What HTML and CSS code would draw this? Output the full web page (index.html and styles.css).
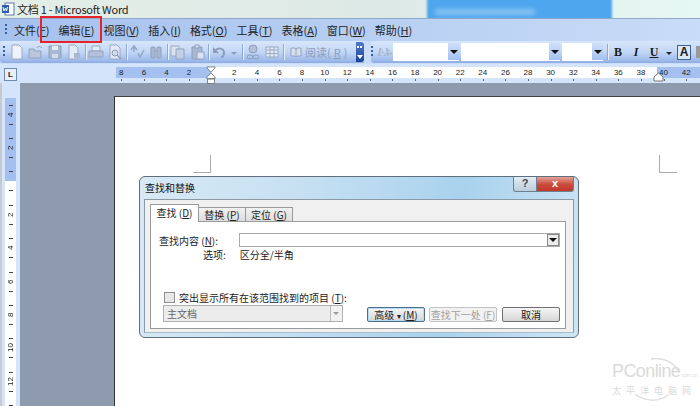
FILE: index.html
```html
<!DOCTYPE html>
<html lang="zh-CN">
<head>
    <meta charset="UTF-8">
    <title>文档 1 - Microsoft Word</title>
    <link rel="stylesheet" href="styles.css">
</head>
<body>
    <div class="app">
        <div class="titlebar">
            <svg class="app-icon" width="13" height="14" viewBox="0 0 13 14"><rect x="3" y="1" width="9" height="12" fill="#fff" stroke="#5c76a8"/><rect x="0" y="3" width="7" height="8" fill="#2f5cb0"/><path d="M1 5l1 4 1.500-3 1 3 1-4" fill="none" stroke="#fff"/></svg>
            <span class="title-text">文档 1 - Microsoft Word</span>
            <span class="glass"><i></i></span>
        </div>

        <div class="menubar">
            <span class="grip"></span>
            <span class="menu-item">文件(<u>F</u>)</span>
            <span class="menu-item">编辑(<u>E</u>)</span>
            <span class="menu-item">视图(<u>V</u>)</span>
            <span class="menu-item">插入(<u>I</u>)</span>
            <span class="menu-item">格式(<u>O</u>)</span>
            <span class="menu-item">工具(<u>T</u>)</span>
            <span class="menu-item">表格(<u>A</u>)</span>
            <span class="menu-item">窗口(<u>W</u>)</span>
            <span class="menu-item">帮助(<u>H</u>)</span>
        </div>

        <div class="toolbars">
            <div class="toolbar toolbar-std">
                <span class="grip"></span>
                <svg class="tool" viewBox="0 0 16 16"><path d="M3 1h7l3 3v11H3z" fill="#eef3fb" stroke="#9aa9c4"/></svg>
                <svg class="tool" viewBox="0 0 16 16"><path d="M1 5h5l1 2h6v7H1z" fill="#b9c6dc" stroke="#93a3bf"/><path d="M9 4c1-2 3-2 5 0" fill="none" stroke="#93a3bf"/></svg>
                <svg class="tool" viewBox="0 0 16 16"><path d="M2 2h12v12H2z" fill="#a9b8d2" stroke="#8d9db9"/><path d="M5 2h6v4H5z" fill="#e6ecf6"/><path d="M5 10h6v4H5z" fill="#d3dcec"/></svg>
                <svg class="tool" viewBox="0 0 16 16"><path d="M3 1h6l3 3v11H3z" fill="#e4eaf5" stroke="#9aa9c4"/><path d="M8 9h6v5H8z" fill="#a9b8d2"/></svg>
                <span class="tool-sep"></span>
                <svg class="tool" viewBox="0 0 16 16"><path d="M4 2h8v5H4z" fill="#e4eaf5" stroke="#9aa9c4"/><path d="M1 7h14v6H1z" fill="#b3c0d8" stroke="#93a3bf"/></svg>
                <svg class="tool" viewBox="0 0 16 16"><path d="M3 1h7l3 3v11H3z" fill="#e4eaf5" stroke="#9aa9c4"/><circle cx="8" cy="9" r="3" fill="#cfd9ea" stroke="#8d9db9"/><path d="M10 11l4 4" stroke="#8d9db9" stroke-width="1.500"/></svg>
                <span class="tool-sep"></span>
                <svg class="tool" viewBox="0 0 16 16"><path d="M2 6l3-4 3 4M5 2v6M9 9l2 4 4-7" fill="none" stroke="#93a3bf" stroke-width="1.400"/></svg>
                <svg class="tool" viewBox="0 0 16 16"><rect x="3" y="3" width="4" height="11" rx="1" fill="#a9b8d2" stroke="#8d9db9"/><rect x="9" y="3" width="4" height="11" rx="1" fill="#a9b8d2" stroke="#8d9db9"/><path d="M7 7h2" stroke="#8d9db9"/></svg>
                <span class="tool-sep"></span>
                <svg class="tool" viewBox="0 0 16 16"><path d="M1 2h8v10H1z" fill="#dbe3f1" stroke="#9aa9c4"/><path d="M6 5h8v10H6z" fill="#c3cfe3" stroke="#93a3bf"/></svg>
                <svg class="tool" viewBox="0 0 16 16"><path d="M3 3h10v12H3z" fill="#a9b8d2" stroke="#8d9db9"/><path d="M6 1h4v3H6z" fill="#dbe3f1" stroke="#8d9db9"/><path d="M8 8h7v7H8z" fill="#dbe3f1" stroke="#93a3bf"/></svg>
                <span class="tool-sep"></span>
                <svg class="tool" viewBox="0 0 16 16"><path d="M4 7c3-4 9-3 9 2 0 2-1 4-3 4" fill="none" stroke="#8d9db9" stroke-width="2"/><path d="M2 3v6h6z" fill="#8d9db9"/></svg>
                <span class="tool-arrow"></span>
                <span class="tool-sep"></span>
                <svg class="tool" viewBox="0 0 16 16"><circle cx="8" cy="5" r="4" fill="#b3c0d8" stroke="#8d9db9"/><ellipse cx="5" cy="13" rx="3" ry="2" fill="none" stroke="#8d9db9"/><ellipse cx="11" cy="13" rx="3" ry="2" fill="none" stroke="#8d9db9"/></svg>
                <svg class="tool" viewBox="0 0 16 16"><path d="M2 3h12v10H2zM2 6h12M2 9.500h12M6 3v10M10 3v10" fill="#e4eaf5" stroke="#9aa9c4"/></svg>
                <span class="tool-sep"></span>
                <span class="read-btn">
                    <svg width="12" height="12" viewBox="0 0 12 12"><path d="M1 2h4l1 1 1-1h4v8H7l-1 1-1-1H1zM6 3v8" fill="#d6dfee" stroke="#93a3bf"/></svg>
                    阅读(<u>R</u>)
                </span>
                <span class="chevron"><i></i><b></b></span>
            </div>
            <div class="toolbar toolbar-fmt">
                <span class="grip"></span>
                <span class="style-icon">4A</span>
                <span class="combo combo-style"><i></i></span>
                <span class="combo combo-font"><i></i></span>
                <span class="combo combo-size"><i></i></span>
                <span class="tool-sep"></span>
                <span class="fmt-btn fmt-b">B</span>
                <span class="fmt-btn fmt-i">I</span>
                <span class="fmt-btn fmt-u">U</span>
                <span class="tool-arrow tool-arrow-dark"></span>
                <span class="fmt-btn fmt-a">A</span>
                <span class="fmt-more"></span>
            </div>
        </div>

        <div class="ruler-row">
            <span class="tab-stop">L</span>
            <div class="h-ruler">
                <span class="h-cell">8</span>
                <span class="h-cell">6</span>
                <span class="h-cell">4</span>
                <span class="h-cell">2</span>
                <span class="h-cell h-zero"></span>
                <span class="h-cell">2</span>
                <span class="h-cell">4</span>
                <span class="h-cell">6</span>
                <span class="h-cell">8</span>
                <span class="h-cell">10</span>
                <span class="h-cell">12</span>
                <span class="h-cell">14</span>
                <span class="h-cell">16</span>
                <span class="h-cell">18</span>
                <span class="h-cell">20</span>
                <span class="h-cell">22</span>
                <span class="h-cell">24</span>
                <span class="h-cell">26</span>
                <span class="h-cell">28</span>
                <span class="h-cell">30</span>
                <span class="h-cell">32</span>
                <span class="h-cell">34</span>
                <span class="h-cell">36</span>
                <span class="h-cell">38</span>
                <span class="h-cell">40</span>
                <span class="h-cell">42</span>
            </div>
            <svg class="indent indent-left" width="10" height="18" viewBox="0 0 11 20"><path d="M1 1h9v1L5.500 7 1 2zM5.500 8L10 12v2H1v-2z" fill="#fff" stroke="#777"/><rect x="1.500" y="14.500" width="8" height="5" fill="#fff" stroke="#777"/></svg>
            <svg class="indent indent-right" width="11" height="10" viewBox="0 0 11 10"><path d="M5.500 1L10 5v4H1V5z" fill="#fff" stroke="#777"/></svg>
        </div>

        <div class="workspace">
            <div class="v-ruler-col">
                <div class="v-ruler">
                    <span class="v-cell v-blue"><i></i><em>4</em><i></i></span>
                    <span class="v-cell v-blue"><i></i><em>2</em><i></i></span>
                    <span class="v-cell v-zero"><i></i><em></em><i></i></span>
                    <span class="v-cell"><i></i><em>2</em><i></i></span>
                    <span class="v-cell"><i></i><em>4</em><i></i></span>
                    <span class="v-cell"><i></i><em>6</em><i></i></span>
                    <span class="v-cell"><i></i><em>8</em><i></i></span>
                    <span class="v-cell"><i></i><em>10</em><i></i></span>
                    <span class="v-cell"><i></i><em>12</em><i></i></span>
                    <span class="v-cell"><i></i><em></em><i></i></span>
                </div>
            </div>
            <div class="desk">
                <div class="page">
                    <span class="crop crop-left"></span>
                    <span class="crop crop-right"></span>
                    <div class="watermark">
                        <svg class="wm-arc" width="60" height="44" viewBox="0 0 60 44"><path d="M24 1c12-2 24 3 28 14M8 36c10 8 24 8 33 1" fill="none" stroke="#dedede" stroke-width="1.500"/></svg>
                        <span class="wm-logo">PConline<small>.com.cn</small></span>
                        <span class="wm-cn">太平洋电脑网</span>
                    </div>
                </div>
            </div>
        </div>

        <span class="highlight"></span>

        <div class="dialog">
            <div class="dialog-head">
                <span class="dialog-title">查找和替换</span>
                <span class="caption-btn caption-help">?</span>
                <span class="caption-btn caption-close">x</span>
            </div>
            <div class="dialog-body">
                <div class="tabs">
                    <span class="tab tab-active">查找 (<u>D</u>)</span>
                    <span class="tab">替换 (<u>P</u>)</span>
                    <span class="tab">定位 (<u>G</u>)</span>
                </div>
                <div class="tab-panel">
                    <div class="find-row">
                        <label class="find-label">查找内容 (<u>N</u>):</label>
                        <span class="find-input"><i></i></span>
                    </div>
                    <div class="option-row">
                        <span class="option-label">选项:</span>
                        <span>区分全/半角</span>
                    </div>
                    <div class="check-row">
                        <span class="checkbox"></span>
                        <span>突出显示所有在该范围找到的项目 (<u>T</u>):</span>
                    </div>
                    <div class="action-row">
                        <span class="scope-select">主文档<i></i></span>
                        <span class="btn btn-default">高级 <small>▾</small> (<u>M</u>)</span>
                        <span class="btn btn-disabled">查找下一处 (<u>F</u>)</span>
                        <span class="btn btn-cancel">取消</span>
                    </div>
                </div>
            </div>
        </div>
    </div>
</body>
</html>
```

FILE: styles.css
```css
html, body {
    margin: 0;
    padding: 0;
}
body {
    width: 700px;
    height: 406px;
    overflow: hidden;
    font-family: "Noto Sans CJK SC", "Liberation Sans", sans-serif;
    font-size: 11px;
    color: #222;
}
u {
    text-decoration: underline;
    text-underline-offset: 1px;
}
.app {
    position: relative;
    width: 700px;
    height: 406px;
    display: flex;
    flex-direction: column;
    overflow: hidden;
}

/* title bar */
.titlebar {
    position: relative;
    height: 18px;
    flex: none;
    display: flex;
    align-items: center;
    gap: 2px;
    padding-left: 2px;
    overflow: hidden;
    background: linear-gradient(90deg, #e4eee8 0%, #dde9e6 55%, #e6f8f4 100%);
}
.title-text {
    position: relative;
    z-index: 1;
    font-size: 11px;
    line-height: 18px;
    letter-spacing: -.27px;
    color: #222;
}
.glass {
    position: absolute;
    left: 427px;
    top: -2px;
    width: 185px;
    height: 24px;
    background: #4ea6ee;
    filter: blur(1px);
}
.glass i {
    position: absolute;
    left: 8px;
    top: 11px;
    width: 100px;
    height: 6px;
    background: #86c4f3;
    filter: blur(2px);
}
.app-icon {
    flex: none;
}

/* menu */
.menubar {
    height: 23px;
    flex: none;
    display: flex;
    align-items: center;
    gap: 9px;
    padding-left: 5px;
    background: linear-gradient(90deg, #a5c1ee 0%, #b6cef2 50%, #c9dcf8 100%);
    border-top: 1px solid #8ea9c9;
    box-sizing: border-box;
}
.grip {
    width: 2px;
    height: 12px;
    flex: none;
    background: repeating-linear-gradient(180deg, #3b5f9c 0 2px, transparent 2px 4px);
}
.menu-item {
    flex: none;
    font-size: 11px;
    line-height: 16px;
    color: #222;
}
.menubar .grip {
    margin-right: -2px;
}

/* toolbars */
.toolbars {
    height: 23px;
    flex: none;
    display: flex;
    background: #c9dcf8;
}
.toolbar {
    height: 22px;
    display: flex;
    align-items: center;
    background: linear-gradient(180deg, #d7e6fb 0%, #c2d7f6 50%, #9db9ea 90%, #8eaae0 100%);
}
.toolbar-std {
    width: 364px;
    flex: none;
    padding-left: 3px;
    box-sizing: border-box;
    border-radius: 3px 0 0 3px;
    position: relative;
}
.toolbar-std .grip {
    margin-right: 4px;
}
.tool {
    width: 16px;
    height: 16px;
    flex: none;
    margin-right: 3px;
}
.tool-sep {
    width: 1px;
    height: 16px;
    flex: none;
    margin: 0 2px 0 0;
    background: #8fa8d0;
    box-shadow: 1px 0 0 #e8f0fc;
}
.tool-arrow {
    width: 0;
    height: 0;
    flex: none;
    margin: 2px 5px 0 1px;
    border-left: 3px solid transparent;
    border-right: 3px solid transparent;
    border-top: 3px solid #8d9db9;
}
.tool-arrow-dark {
    border-top-color: #222;
    margin: 2px 5px 0 3px;
}
.read-btn {
    display: flex;
    align-items: center;
    gap: 3px;
    padding-left: 4px;
    font-size: 11px;
    white-space: nowrap;
    color: #8d9db9;
}
.chevron {
    position: absolute;
    right: 0;
    top: 1px;
    width: 8px;
    height: 20px;
    box-sizing: border-box;
    border-radius: 0 3px 3px 0;
    background: linear-gradient(180deg, #4e79c8 0%, #1d449a 100%);
}
.chevron i {
    position: absolute;
    left: 1px;
    top: 4px;
    width: 5px;
    height: 2px;
    background: repeating-linear-gradient(90deg, #fff 0 2px, transparent 2px 3px);
}
.chevron b {
    position: absolute;
    left: 1px;
    bottom: 3px;
    width: 0;
    height: 0;
    border-left: 3px solid transparent;
    border-right: 3px solid transparent;
    border-top: 4px solid #fff;
}
.toolbar-fmt {
    flex: 1;
    min-width: 0;
    margin-left: 7px;
    overflow: hidden;
    border-radius: 3px 0 0 3px;
}
.style-icon {
    width: 14px;
    margin: 0 1px 0 5px;
    flex: none;
    font: italic bold 13px "Liberation Serif", serif;
    color: #a7b5cf;
    text-align: center;
    transform: scaleX(-1);
}
.combo {
    height: 18px;
    flex: none;
    position: relative;
    background: #fff;
    margin-right: 2px;
}
.combo i {
    position: absolute;
    right: 0;
    top: 0;
    width: 11px;
    height: 17px;
    background: linear-gradient(180deg, #cfe0f9 0%, #a4c1ef 100%);
}
.combo i::after, .find-input i::after {
    content: "";
    position: absolute;
    left: 2px;
    top: 7px;
    border-left: 4px solid transparent;
    border-right: 4px solid transparent;
    border-top: 4px solid #111;
}
.combo-style {
    width: 66px;
}
.combo-font {
    width: 99px;
}
.combo-size {
    width: 41px;
}
.toolbar-fmt .tool-sep {
    margin: 0 1px 0 2px;
}
.fmt-btn {
    width: 18px;
    flex: none;
    text-align: center;
    font: bold 12px "Liberation Serif", serif;
    color: #1a1a1a;
}
.fmt-i {
    font-style: italic;
}
.fmt-u {
    text-decoration: underline;
}
.fmt-a {
    width: 12px;
    height: 13px;
    line-height: 13px;
    font-family: "Liberation Sans", sans-serif;
    border: 1px solid #40618f;
    background: #dce8fa;
}
.fmt-more {
    width: 4px;
    height: 12px;
    flex: none;
    margin-left: 5px;
    background: #9a9a9a;
}

/* rulers */
.ruler-row {
    position: relative;
    height: 19px;
    flex: none;
    background: #d4e5fb;
}
.tab-stop {
    position: absolute;
    left: 4px;
    top: 4px;
    width: 11px;
    height: 11px;
    font: bold 8px/11px "Liberation Sans", sans-serif;
    text-align: center;
    background: #e8f0fc;
    border: 1px solid #6f8bb0;
}
.h-ruler {
    position: absolute;
    left: 116px;
    right: 0;
    top: 3px;
    height: 11px;
    display: flex;
    background: linear-gradient(90deg, #a3c0f0 0 95px, #fff 95px 541px, #a3c0f0 541px);
}
.h-cell {
    position: relative;
    width: 22.600px;
    flex: none;
    font: 8px/11px "Liberation Sans", sans-serif;
    text-align: center;
    color: #222;
    left: -6px;
}
.h-cell::after {
    content: "";
    position: absolute;
    left: 50%;
    top: 12px;
    width: 1px;
    height: 2px;
    background: #666;
}
.h-zero::after {
    display: none;
}
.indent {
    position: absolute;
}
.indent-left {
    left: 206px;
    top: 2px;
}
.indent-right {
    left: 653px;
    top: 8px;
}

/* workspace */
.workspace {
    flex: 1;
    display: flex;
    min-height: 0;
}
.v-ruler-col {
    width: 20px;
    flex: none;
    padding: 15px 4px 0 5px;
    box-sizing: border-box;
    background: #d4e5fb;
    border-left: 2px solid #c6c9ce;
}
.v-ruler {
    display: flex;
    flex-direction: column;
    margin-left: -2px;
}
.v-cell {
    height: 33.400px;
    flex: none;
    display: flex;
    flex-direction: column;
    align-items: center;
    justify-content: center;
    gap: 1px;
    background: #fff;
}
.v-cell i {
    width: 4px;
    height: 1px;
    flex: none;
    background: #444;
    margin: 2px 0;
}
.v-cell em {
    width: 9px;
    height: 12px;
    flex: none;
    font: 8px/9px "Liberation Sans", sans-serif;
    color: #222;
    text-align: center;
    writing-mode: vertical-rl;
    transform: rotate(180deg);
}
.v-blue {
    background: #a3c0f0;
}
.v-zero {
    background: linear-gradient(180deg, #a3c0f0 0 50%, #fff 50%);
}
.desk {
    flex: 1;
    padding: 13px 0 0 94px;
    background: #8e9aae;
}
.page {
    position: relative;
    height: 400px;
    background: #fff;
    border-left: 1px solid #333;
    border-top: 1px solid #444;
}
.crop {
    position: absolute;
    top: 58px;
    width: 18px;
    height: 18px;
    box-sizing: border-box;
    border-bottom: 1px solid #aaa;
}
.crop-left {
    left: 78px;
    border-right: 1px solid #aaa;
}
.crop-right {
    left: 544px;
    border-left: 1px solid #aaa;
}
.watermark {
    position: absolute;
    left: 497px;
    top: 267px;
    width: 84px;
    display: flex;
    flex-direction: column;
    color: #dadada;
}
.wm-arc {
    position: absolute;
    left: 15px;
    top: -6px;
}
.wm-logo {
    position: relative;
    font: 18px/15px "Liberation Sans", sans-serif;
    letter-spacing: -.6px;
    white-space: nowrap;
}
.wm-logo small {
    font-size: 5px;
    letter-spacing: 0;
}
.wm-cn {
    position: relative;
    margin-top: 2px;
    font-size: 9px;
    line-height: 12px;
    letter-spacing: 5px;
    white-space: nowrap;
}

/* red box round the edit menu */
.highlight {
    position: absolute;
    left: 40px;
    top: 16px;
    width: 58px;
    height: 23px;
    border: 2px solid #e8222a;
}

/* find and replace dialog */
.dialog {
    position: absolute;
    left: 139px;
    top: 176px;
    width: 440px;
    height: 162px;
    box-sizing: border-box;
    display: flex;
    flex-direction: column;
    padding: 0 4px 4px;
    border: 1px solid #5f6f7e;
    border-radius: 6px;
    background: linear-gradient(100deg, #d8e9f5 0%, #c6e0f2 35%, #a9d2ee 70%, #cfe5f4 100%);
}
.dialog-head {
    height: 22px;
    flex: none;
    display: flex;
    align-items: flex-start;
}
.dialog-title {
    flex: 1;
    padding: 4px 0 0 1px;
    font-size: 10px;
    line-height: 14px;
    color: #111;
}
.caption-btn {
    height: 15px;
    flex: none;
    box-sizing: border-box;
    text-align: center;
    font: bold 11px/13px "Liberation Sans", sans-serif;
    border: 1px solid #6e7f90;
    border-top: none;
}
.caption-help {
    width: 24px;
    color: #445;
    border-radius: 0 0 0 3px;
    background: linear-gradient(180deg, #e3edf5 0%, #bccdda 100%);
}
.caption-close {
    width: 37px;
    color: #fff;
    border-left: none;
    border-radius: 0 0 3px 0;
    background: linear-gradient(180deg, #e2a296 0%, #c9493a 55%, #c0392c 100%);
}
.dialog-body {
    flex: 1;
    display: flex;
    flex-direction: column;
    padding: 5px 7px 3px 5px;
    background: #f0f0f0;
    border: 1px solid #8c9aa6;
    border-bottom-color: #a9bcc9;
    font-size: 10px;
}
.tabs {
    display: flex;
    height: 17px;
    flex: none;
    align-items: flex-end;
    margin-bottom: -1px;
}
.tab {
    position: relative;
    height: 15px;
    width: 47px;
    box-sizing: border-box;
    text-align: center;
    line-height: 14px;
    background: linear-gradient(180deg, #f2f2f2 0%, #dcdcdc 100%);
    border: 1px solid #9a9a9a;
    border-left: none;
}
.tab-active {
    height: 18px;
    width: 49px;
    line-height: 16px;
    background: #fff;
    border-left: 1px solid #9a9a9a;
    border-bottom: none;
    z-index: 1;
}
.tab-panel {
    flex: 1;
    padding: 11px 5px 0 8px;
    background: #fff;
    border: 1px solid #9a9a9a;
}
.find-row {
    display: flex;
    height: 14px;
    align-items: center;
}
.find-label {
    width: 80px;
    flex: none;
}
.find-input {
    position: relative;
    flex: 1;
    height: 14px;
    box-sizing: border-box;
    border: 1px solid #aaa;
}
.find-input i {
    position: absolute;
    right: 0;
    top: 0;
    width: 12px;
    height: 12px;
    border: 1px solid #888;
    box-sizing: border-box;
    background: #ececec;
}
.find-input i::after {
    left: 1px;
    top: 3px;
}
.option-row {
    display: flex;
    height: 14px;
    align-items: center;
    padding-left: 44px;
    gap: 14px;
}
.check-row {
    display: flex;
    align-items: center;
    gap: 4px;
    height: 14px;
    margin-top: 29px;
    padding-left: 5px;
}
.checkbox {
    width: 9px;
    height: 9px;
    flex: none;
    background: #e8e8e8;
    border: 1px solid #8f8f8f;
}
.action-row {
    display: flex;
    align-items: flex-end;
    height: 17px;
    margin-top: 1px;
    padding-left: 4px;
}
.scope-select {
    position: relative;
    width: 180px;
    height: 17px;
    box-sizing: border-box;
    flex: none;
    padding-left: 3px;
    line-height: 15px;
    color: #666;
    background: #ececec;
    border: 1px solid #b0b0b0;
    margin-right: 24px;
}
.scope-select i {
    position: absolute;
    right: 0;
    top: 0;
    width: 12px;
    height: 15px;
    box-sizing: border-box;
    border-left: 1px solid #bbb;
    background: #f2f2f2;
}
.scope-select i::after {
    content: "";
    position: absolute;
    left: 2px;
    top: 6px;
    border-left: 3px solid transparent;
    border-right: 3px solid transparent;
    border-top: 3px solid #999;
}
.btn {
    height: 15px;
    box-sizing: border-box;
    flex: none;
    text-align: center;
    line-height: 13px;
    border: 1px solid #707070;
    border-radius: 2px;
    background: linear-gradient(180deg, #f6f6f6 0%, #e6e6e6 50%, #d6d6d6 100%);
}
.btn small {
    font-size: 8px;
}
.btn-default {
    width: 58px;
    margin-right: 4px;
    border-color: #4b6f8c;
    box-shadow: inset 0 0 0 1px #b5dcf3;
}
.btn-disabled {
    width: 68px;
    margin-right: 5px;
    color: #a0a0a0;
    border-color: #c4c4c4;
    background: #f2f2f2;
}
.btn-cancel {
    width: 58px;
}
```
